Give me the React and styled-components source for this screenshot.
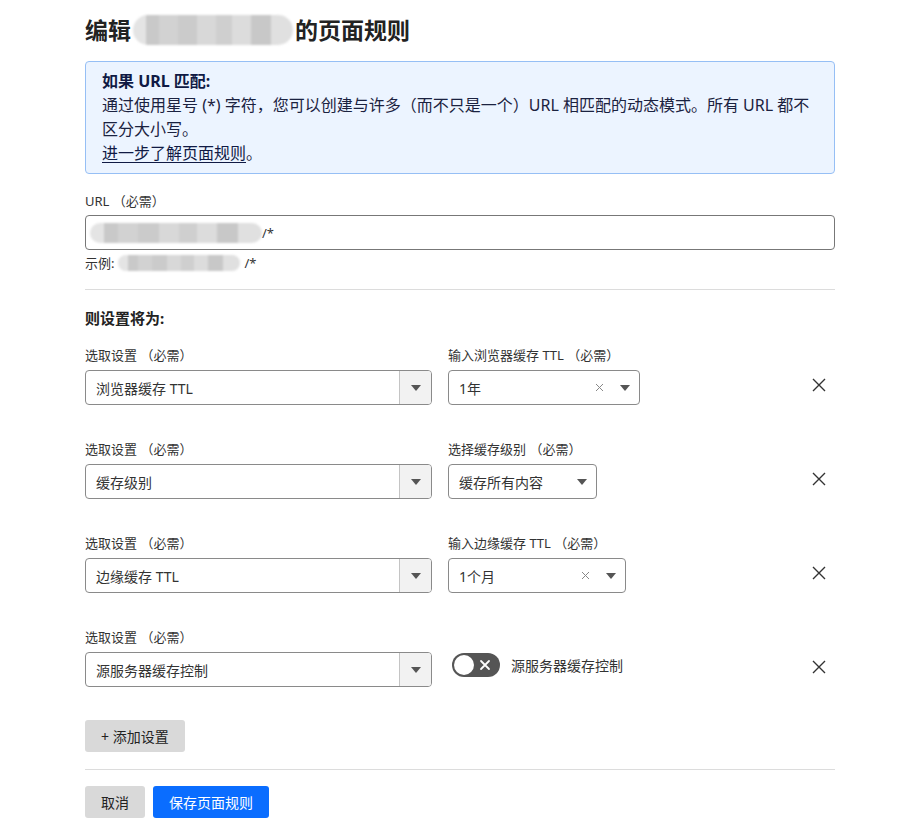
import React from "react";
import styled, { createGlobalStyle } from "styled-components";

const GlobalStyle = createGlobalStyle`
  body {
    margin: 0;
    background: #fff;
    font-family: "Noto Sans", "Noto Sans CJK SC", sans-serif;
    color: #222;
  }
`;

const rules = [
  {
    setting: "浏览器缓存 TTL",
    label: "输入浏览器缓存 TTL （必需）",
    value: "1年",
    width: 192,
    clearable: true,
  },
  {
    setting: "缓存级别",
    label: "选择缓存级别 （必需）",
    value: "缓存所有内容",
    width: 149,
  },
  {
    setting: "边缘缓存 TTL",
    label: "输入边缘缓存 TTL （必需）",
    value: "1个月",
    width: 178,
    clearable: true,
  },
  {
    setting: "源服务器缓存控制",
    toggle: "源服务器缓存控制",
  },
];

export default function App() {
  return (
    <Page>
      <GlobalStyle />
      <Title>
        编辑<Redacted $w={160} $h={30} />的页面规则
      </Title>

      <InfoBox>
        <InfoHead>如果 URL 匹配:</InfoHead>
        <div>
          通过使用星号 (*) 字符，您可以创建与许多（而不只是一个）URL
          相匹配的动态模式。所有 URL 都不区分大小写。
        </div>
        <div>
          <InfoLink href="#">进一步了解页面规则</InfoLink>。
        </div>
      </InfoBox>

      <FieldLabel>URL （必需）</FieldLabel>
      <UrlInput>
        <Redacted $w={172} $h={20} />
        <span>/*</span>
      </UrlInput>
      <Example>
        示例: <Redacted $w={122} $h={16} />/*
      </Example>

      <Divider $top={17} />

      <SectionTitle>则设置将为:</SectionTitle>

      {rules.map((r, i) => (
        <RuleRow key={i}>
          <RowLabel>选取设置 （必需）</RowLabel>
          <RowLabel>{r.label || ""}</RowLabel>
          <span />
          <SettingSelect>
            <SelectText>{r.setting}</SelectText>
            <ArrowBox>
              <Caret />
            </ArrowBox>
          </SettingSelect>
          {r.toggle ? (
            <ToggleWrap>
              <Toggle>
                <Knob />
                <svg width="12" height="12" viewBox="0 0 12 12">
                  <path
                    d="M2 2 L10 10 M10 2 L2 10"
                    stroke="#fff"
                    strokeWidth="1.8"
                    strokeLinecap="round"
                  />
                </svg>
              </Toggle>
              <ToggleText>{r.toggle}</ToggleText>
            </ToggleWrap>
          ) : (
            <ValueSelect $w={r.width}>
              <SelectText>{r.value}</SelectText>
              {r.clearable && (
                <ClearMark>
                  <svg width="9" height="9" viewBox="0 0 9 9">
                    <path d="M1 1 L8 8 M8 1 L1 8" stroke="#888" strokeWidth="1" />
                  </svg>
                </ClearMark>
              )}
              <Caret />
            </ValueSelect>
          )}
          <CloseBtn aria-label="删除">
            <svg width="14" height="14" viewBox="0 0 14 14">
              <path d="M1 1 L13 13 M13 1 L1 13" stroke="#333" strokeWidth="1.4" />
            </svg>
          </CloseBtn>
        </RuleRow>
      ))}

      <AddRow>
        <GreyButton>+ 添加设置</GreyButton>
      </AddRow>

      <Divider $top={17} />

      <Actions>
        <GreyButton>取消</GreyButton>
        <PrimaryButton>保存页面规则</PrimaryButton>
      </Actions>
    </Page>
  );
}

const Page = styled.div`
  width: 750px;
  padding: 14px 65px 20px 85px;
`;

const Title = styled.h1`
  margin: 0;
  display: flex;
  align-items: center;
  gap: 2px;
  font-size: 23px;
  line-height: 32px;
  font-weight: 700;
  color: #222;
`;

const Redacted = styled.span`
  display: inline-block;
  width: ${(p) => p.$w}px;
  height: ${(p) => p.$h}px;
  border-radius: ${(p) => p.$h / 2}px;
  background: linear-gradient(
      90deg,
      #e4e4e4 0 8%,
      #c9c9c9 8% 16%,
      #d2d2d2 16% 28%,
      #cbcbcb 28% 40%,
      #d8d8d8 40% 52%,
      #cfcfcf 52% 62%,
      #dcdcdc 62% 74%,
      #c8c8c8 74% 86%,
      #e0e0e0 86% 100%
    );
  filter: blur(1.2px);
  vertical-align: middle;
`;

const InfoBox = styled.div`
  margin-top: 15px;
  padding: 7px 16px 8px;
  border: 1px solid #96bff5;
  border-radius: 4px;
  background: #ecf4ff;
  font-size: 16px;
  line-height: 24px;
  color: #1b2240;
`;

const InfoHead = styled.div`
  font-weight: 700;
  color: #101a44;
`;

const InfoLink = styled.a`
  color: #101a44;
  text-decoration: underline;
  text-underline-offset: 3px;
`;

const FieldLabel = styled.div`
  margin-top: 17px;
  font-size: 13px;
  line-height: 20px;
  color: #333;
`;

const UrlInput = styled.div`
  margin-top: 4px;
  height: 35px;
  box-sizing: border-box;
  display: flex;
  align-items: center;
  padding: 0 4px;
  border: 1px solid #777;
  border-radius: 4px;
  font-size: 13px;
  color: #333;
`;

const Example = styled.div`
  margin-top: 4px;
  display: flex;
  align-items: center;
  gap: 4px;
  font-size: 13px;
  line-height: 18px;
  color: #333;
`;

const Divider = styled.hr`
  margin: ${(p) => p.$top}px 0 0;
  border: none;
  border-top: 1px solid #dcdcdc;
`;

const SectionTitle = styled.div`
  margin-top: 18px;
  font-size: 15px;
  line-height: 20px;
  font-weight: 700;
  color: #222;
`;

const RuleRow = styled.div`
  display: grid;
  grid-template-columns: 347px 1fr 32px;
  column-gap: 16px;
  row-gap: 6px;
  margin-top: 18px;
  & + & {
    margin-top: 35px;
  }
`;

const RowLabel = styled.div`
  font-size: 13px;
  line-height: 18px;
  color: #333;
`;

const SettingSelect = styled.div`
  height: 35px;
  box-sizing: border-box;
  display: flex;
  align-items: center;
  border: 1px solid #8a8a8a;
  border-radius: 4px;
  overflow: hidden;
`;

const SelectText = styled.span`
  flex: 1;
  padding-left: 10px;
  font-size: 14px;
  color: #333;
  white-space: nowrap;
`;

const ArrowBox = styled.span`
  width: 31px;
  align-self: stretch;
  display: flex;
  align-items: center;
  justify-content: center;
  background: #f2f2f2;
  border-left: 1px solid #c4c4c4;
`;

const Caret = styled.span`
  width: 0;
  height: 0;
  border-left: 5px solid transparent;
  border-right: 5px solid transparent;
  border-top: 6px solid #555;
`;

const ValueSelect = styled.div`
  width: ${(p) => p.$w}px;
  height: 35px;
  box-sizing: border-box;
  display: flex;
  align-items: center;
  padding-right: 8px;
  border: 1px solid #8a8a8a;
  border-radius: 4px;
  & > ${Caret} {
    margin-left: 16px;
    margin-right: 1px;
  }
`;

const ClearMark = styled.span`
  display: flex;
  align-items: center;
`;

const ToggleWrap = styled.div`
  display: flex;
  align-items: center;
  gap: 11px;
  padding-left: 4px;
  align-self: start;
  margin-top: 1px;
`;

const Toggle = styled.span`
  width: 48px;
  height: 24px;
  box-sizing: border-box;
  border-radius: 12px;
  background: #555;
  display: flex;
  align-items: center;
  justify-content: space-between;
  padding: 0 9px 0 2px;
`;

const Knob = styled.span`
  width: 20px;
  height: 20px;
  border-radius: 50%;
  background: #fff;
`;

const ToggleText = styled.span`
  font-size: 14px;
  color: #333;
`;

const CloseBtn = styled.button`
  border: none;
  background: none;
  padding: 0;
  height: 30px;
  display: flex;
  align-items: center;
  justify-content: center;
  cursor: pointer;
`;

const AddRow = styled.div`
  margin-top: 33px;
`;

const GreyButton = styled.button`
  height: 32px;
  padding: 0 16px;
  border: none;
  border-radius: 3px;
  background: #d9d9d9;
  font-family: "Noto Sans", "Noto Sans CJK SC", sans-serif;
  font-size: 14px;
  color: #222;
`;

const Actions = styled.div`
  display: flex;
  gap: 8px;
  margin-top: 16px;
`;

const PrimaryButton = styled(GreyButton)`
  background: #0a6dff;
  color: #fff;
`;
